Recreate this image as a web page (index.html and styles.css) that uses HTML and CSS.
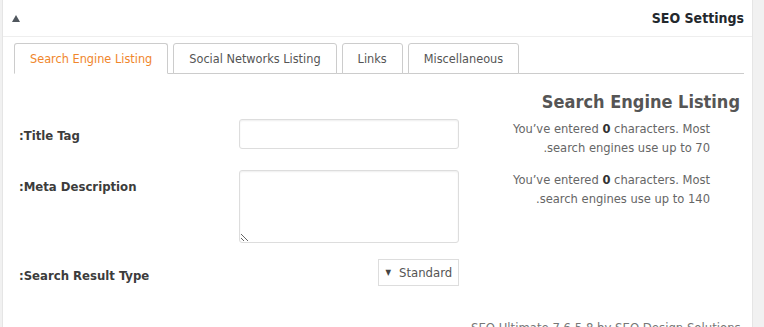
FILE: index.html
```html
<!DOCTYPE html>
<html lang="en">
<head>
    <meta charset="UTF-8">
    <meta name="viewport" content="width=device-width, initial-scale=1.0">
    <link rel="stylesheet" href="styles.css">
    <title>SEO Settings</title>
</head>
<body>

    <div class="postbox">
        <div class="postbox-header">
            <span class="toggle">
                <svg width="8" height="7" viewBox="0 0 8 7"><polygon points="4,0 8,7 0,7" fill="#50575e"/></svg>
            </span>
            <h3 class="postbox-title">SEO Settings</h3>
        </div>

        <div class="inside">
            <ul class="tabs">
                <li class="tab active">Search Engine Listing</li>
                <li class="tab">Social Networks Listing</li>
                <li class="tab">Links</li>
                <li class="tab">Miscellaneous</li>
            </ul>

            <h4 class="section-title" dir="rtl">Search Engine Listing</h4>

            <div class="row row-title">
                <label class="field-label" for="title-tag" dir="rtl">Title Tag:</label>
                <div class="field">
                    <input type="text" id="title-tag" dir="rtl">
                </div>
                <div class="help" dir="rtl">
                    <span class="line">You’ve entered <strong>0</strong> characters. Most</span>
                    <span class="line">search engines use up to 70.</span>
                </div>
            </div>

            <div class="row row-desc">
                <label class="field-label" for="meta-desc" dir="rtl">Meta Description:</label>
                <div class="field">
                    <textarea id="meta-desc" dir="rtl"></textarea>
                </div>
                <div class="help" dir="rtl">
                    <span class="line">You’ve entered <strong>0</strong> characters. Most</span>
                    <span class="line">search engines use up to 140.</span>
                </div>
            </div>

            <div class="row row-type">
                <label class="field-label" for="result-type" dir="rtl">Search Result Type:</label>
                <div class="field field-end">
                    <div class="select-box">
                        <span class="select-arrow">▼</span>
                        <select id="result-type">
                            <option>Standard</option>
                        </select>
                    </div>
                </div>
            </div>

            <p class="credits">SEO Ultimate 7.6.5.8 by SEO Design Solutions</p>
        </div>
    </div>

</body>
</html>
```

FILE: styles.css
```css
body {
    margin: 0;
    background-color: #f1f1f1;
    font-family: 'DejaVu Sans Condensed', 'DejaVu Sans', sans-serif;
    font-size: 13px;
    color: #444;
}

.postbox {
    margin-left: 2px;
    width: 749px;
    height: 340px;
    background-color: #fff;
    border: 1px solid #e5e5e5;
    border-top: none;
}

.postbox-header {
    display: flex;
    align-items: center;
    justify-content: space-between;
    height: 36px;
    padding: 0 8px 0 8px;
    border-bottom: 1px solid #eee;
}

.toggle {
    display: flex;
    padding-left: 1px;
    padding-top: 1px;
}

.postbox-title {
    margin: 0;
    font-size: 14px;
    font-weight: bold;
    color: #23282d;
}

.inside {
    padding: 6px 8px 0 11px;
}

.tabs {
    display: flex;
    gap: 5px;
    margin: 0;
    padding: 0;
    list-style: none;
    border-bottom: 1px solid #ccc;
}

.tab {
    height: 29px;
    line-height: 29px;
    padding: 0 15px;
    font-size: 12.6px;
    border: 1px solid #ccc;
    border-radius: 3px 3px 0 0;
    background-color: #fff;
    color: #555;
    margin-bottom: -1px;
}

.tab.active {
    color: #f0862b;
    border-bottom-color: #fff;
}

.section-title {
    margin: 17px 4px 6px 0;
    font-size: 18px;
    line-height: 22px;
    font-weight: bold;
    color: #555;
    text-align: right;
}

.row {
    display: flex;
    align-items: flex-start;
}

.row-title {
    margin-bottom: 13px;
}

.row-desc {
    margin-bottom: 16px;
}

.field-label {
    width: 220px;
    padding: 7px 0 0 5px;
    line-height: 19px;
    font-weight: bold;
    color: #3c3c3c;
    text-align: left;
}

.field {
    display: flex;
    width: 220px;
}

.field-end {
    justify-content: flex-end;
}

input[type="text"],
textarea {
    box-sizing: border-box;
    width: 220px;
    border: 1px solid #ddd;
    border-radius: 3px;
    box-shadow: inset 0 1px 2px rgba(0, 0, 0, 0.07);
    font-family: inherit;
    font-size: 13px;
    margin: 0;
}

input[type="text"] {
    height: 30px;
}

textarea {
    height: 73px;
}

.help {
    width: 251px;
    line-height: 19px;
    font-size: 12.8px;
    color: #666;
    text-align: right;
}

.help .line {
    display: block;
}

.help strong {
    color: #333;
}

.select-box {
    display: flex;
    align-items: center;
    box-sizing: border-box;
    height: 27px;
    padding: 0 0 0 6px;
    border: 1px solid #ddd;
}

.select-arrow {
    font-size: 8px;
    color: #444;
    margin-right: 5px;
}

select {
    -webkit-appearance: none;
    appearance: none;
    border: none;
    background: none;
    font-family: inherit;
    font-size: 13px;
    color: #555;
    padding: 0 5px 0 3px;
    margin: 0;
}

.credits {
    margin: 32px 0 0;
    padding-left: 457px;
    color: #777;
    line-height: 19px;
}
```
